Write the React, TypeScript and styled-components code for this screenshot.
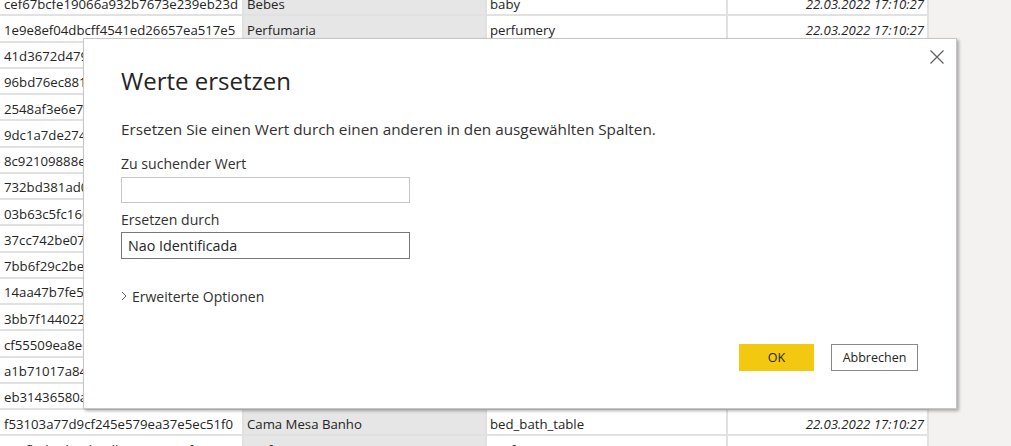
import React from "react";
import styled, { createGlobalStyle } from "styled-components";

const Global = createGlobalStyle`
  html, body { margin: 0; padding: 0; background: #f3f2f1; }
  body { font-family: "Open Sans", "Noto Sans", sans-serif; color: #252423; }
`;

const Screen = styled.div`
  position: relative;
  width: 1011px;
  height: 446px;
  overflow: hidden;
  background: #f3f2f1;
`;

const Grid = styled.div`
  display: grid;
  grid-template-columns: 244px 243px 241px 201px;
  width: 929px;
  margin-top: -10px;
  background: #ffffff;
`;

const Cell = styled.div<{ $shade?: boolean; $right?: boolean; $italic?: boolean; $first?: boolean }>`
  box-sizing: border-box;
  height: 26.25px;
  display: flex;
  align-items: center;
  justify-content: ${(p) => (p.$right ? "flex-end" : "flex-start")};
  padding: 3px 3px 0 ${(p) => (p.$first ? "4px" : "3px")};
  border-right: 2px solid #e1e1e1;
  border-bottom: 2px solid #e1e1e1;
  background: ${(p) => (p.$shade ? "#e6e6e6" : "#ffffff")};
  font-size: 13.2px;
  font-style: ${(p) => (p.$italic ? "italic" : "normal")};
  color: #252423;
  white-space: nowrap;
  overflow: hidden;
`;

const Dialog = styled.div`
  position: absolute;
  left: 83px;
  top: 38px;
  width: 874px;
  height: 371px;
  box-sizing: border-box;
  background: #ffffff;
  border: 1px solid #c8c6c4;
  box-shadow: 2px 2px 3px rgba(0, 0, 0, 0.3);
  padding: 26px 37px 0 37px;
  display: flex;
  flex-direction: column;
`;

const Close = styled.button`
  position: absolute;
  top: 9px;
  right: 10px;
  width: 18px;
  height: 18px;
  padding: 0;
  border: none;
  background: transparent;
  display: flex;
  align-items: center;
  justify-content: center;
`;

const Title = styled.h1`
  margin: 0;
  font-size: 24px;
  font-weight: 400;
  line-height: 32px;
  color: #252423;
`;

const Subtitle = styled.p`
  margin: 22px 0 0 0;
  font-size: 15.3px;
  line-height: 20px;
  color: #323130;
`;

const Label = styled.label<{ $gap: number }>`
  display: block;
  margin-top: ${(p) => p.$gap}px;
  font-size: 14.1px;
  line-height: 20px;
  color: #323130;
`;

const Input = styled.div<{ $strong?: boolean }>`
  box-sizing: border-box;
  width: 289px;
  height: ${(p) => (p.$strong ? 27 : 26)}px;
  margin-top: ${(p) => (p.$strong ? 2 : 3)}px;
  border: 1px solid ${(p) => (p.$strong ? "#7a7876" : "#c8c6c4")};
  padding: 0 6px;
  display: flex;
  align-items: center;
  font-size: 14.3px;
  color: #252423;
`;

const Advanced = styled.div`
  margin-top: 27px;
  display: flex;
  align-items: center;
  gap: 5px;
  height: 20px;
  font-size: 14px;
  color: #323130;
`;

const Footer = styled.div`
  margin-top: 38px;
  display: flex;
  justify-content: flex-end;
  gap: 17px;
  padding-right: 1px;
`;

const Button = styled.button<{ $primary?: boolean }>`
  box-sizing: border-box;
  height: 27px;
  width: ${(p) => (p.$primary ? 75 : 87)}px;
  border: ${(p) => (p.$primary ? "none" : "1px solid #8a8886")};
  background: ${(p) => (p.$primary ? "#f2c811" : "#ffffff")};
  font-family: "Open Sans", "Noto Sans", sans-serif;
  font-size: 12.5px;
  color: #252423;
  padding: 0;
`;

const D = "22.03.2022 17:10:27";

const rows: [string, string, string][] = [
  ["cef67bcfe19066a932b7673e239eb23d", "Bebes", "baby"],
  ["1e9e8ef04dbcff4541ed26657ea517e5", "Perfumaria", "perfumery"],
  ["41d3672d4792049fa1779bb35283ed13", "Artes", "art"],
  ["96bd76ec8810374ed1b65e291975717f", "Esporte Lazer", "sports_leisure"],
  ["2548af3e6e77a690cf3eb6368e9ab61e", "Bebes", "baby"],
  ["9dc1a7de274444849c219cff195d0b71", "Utilidades Domesticas", "housewares"],
  ["8c92109888e8cdf9d66dc7e463025574", "Instrumentos Musicais", "musical_instruments"],
  ["732bd381ad09e530fe0a5e3a8ac3c4c0", "Cool Stuff", "cool_stuff"],
  ["03b63c5fc16691530586ae020c345514", "Moveis Decoracao", "furniture_decor"],
  ["37cc742be07708b53a98702e77a21a02", "Eletrodomesticos", "home_appliances"],
  ["7bb6f29c2be57716194f96496660c7c2", "Brinquedos", "toys"],
  ["14aa47b7fe5c25522b47b4b29c98dcb9", "Cama Mesa Banho", "bed_bath_table"],
  ["3bb7f144022e6732727d8d838a7b13b3", "Esporte Lazer", "sports_leisure"],
  ["cf55509ea8edaaac1d28fdb16e48fc22", "Instrumentos Musicais", "musical_instruments"],
  ["a1b71017a84f92fd8da4aeefba108a24", "Moveis Decoracao", "furniture_decor"],
  ["eb31436580a610f202c859463d8c7415", "Beleza Saude", "health_beauty"],
  ["f53103a77d9cf245e579ea37e5ec51f0", "Cama Mesa Banho", "bed_bath_table"],
  ["3c6fbab4d79d9adb36c8c2498f1094a9", "Perfumaria", "perfumery"],
];

const CloseIcon = () => (
  <svg width="16" height="16" viewBox="0 0 16 16">
    <path d="M1.5 1.5 L14.5 14.5 M14.5 1.5 L1.5 14.5" stroke="#605e5c" strokeWidth="1.2" fill="none" />
  </svg>
);

const Chevron = () => (
  <svg width="6" height="10" viewBox="0 0 6 10">
    <path d="M1 1 L5 5 L1 9" stroke="#605e5c" strokeWidth="1" fill="none" />
  </svg>
);

export default function App() {
  return (
    <Screen>
      <Global />
      <Grid>
        {rows.map(([id, cat, en]) => (
          <React.Fragment key={id}>
            <Cell $first>{id}</Cell>
            <Cell $shade>{cat}</Cell>
            <Cell>{en}</Cell>
            <Cell $right $italic>{D}</Cell>
          </React.Fragment>
        ))}
      </Grid>
      <Dialog>
        <Close aria-label="Schließen">
          <CloseIcon />
        </Close>
        <Title>Werte ersetzen</Title>
        <Subtitle>Ersetzen Sie einen Wert durch einen anderen in den ausgewählten Spalten.</Subtitle>
        <Label $gap={15}>Zu suchender Wert</Label>
        <Input />
        <Label $gap={7}>Ersetzen durch</Label>
        <Input $strong>Nao Identificada</Input>
        <Advanced>
          <Chevron />
          <span>Erweiterte Optionen</span>
        </Advanced>
        <Footer>
          <Button $primary>OK</Button>
          <Button>Abbrechen</Button>
        </Footer>
      </Dialog>
    </Screen>
  );
}
